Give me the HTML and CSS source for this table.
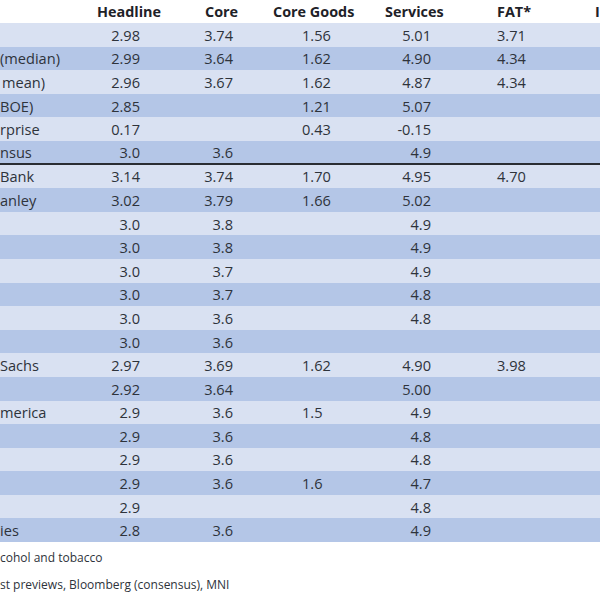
FILE: index.html
```html
<!DOCTYPE html>
<html lang="en">
<head>
<meta charset="utf-8">
<title>CPI previews</title>
<link rel="stylesheet" href="styles.css">
</head>
<body>
<div class="sheet">
  <div class="head">
    <div></div>
    <div>Headline</div>
    <div>Core</div>
    <div>Core Goods</div>
    <div>Services</div>
    <div>FAT*</div>
    <div>I</div>
  </div>
  <div class="rows">
    <div class="row light"><div class="lab"></div><div class="hl">2.98</div><div class="co">3.74</div><div class="cg">1.56</div><div class="sv">5.01</div><div class="ft">3.71</div></div>
    <div class="row dark"><div class="lab">(median)</div><div class="hl">2.99</div><div class="co">3.64</div><div class="cg">1.62</div><div class="sv">4.90</div><div class="ft">4.34</div></div>
    <div class="row light"><div class="lab cut">mean)</div><div class="hl">2.96</div><div class="co">3.67</div><div class="cg">1.62</div><div class="sv">4.87</div><div class="ft">4.34</div></div>
    <div class="row dark"><div class="lab">BOE)</div><div class="hl">2.85</div><div class="co"></div><div class="cg">1.21</div><div class="sv">5.07</div><div class="ft"></div></div>
    <div class="row light"><div class="lab">rprise</div><div class="hl">0.17</div><div class="co"></div><div class="cg">0.43</div><div class="sv">-0.15</div><div class="ft"></div></div>
    <div class="row dark rule"><div class="lab">nsus</div><div class="hl">3.0</div><div class="co">3.6</div><div class="cg"></div><div class="sv">4.9</div><div class="ft"></div></div>
    <div class="row light"><div class="lab">Bank</div><div class="hl">3.14</div><div class="co">3.74</div><div class="cg">1.70</div><div class="sv">4.95</div><div class="ft">4.70</div></div>
    <div class="row dark"><div class="lab">anley</div><div class="hl">3.02</div><div class="co">3.79</div><div class="cg">1.66</div><div class="sv">5.02</div><div class="ft"></div></div>
    <div class="row light"><div class="lab"></div><div class="hl">3.0</div><div class="co">3.8</div><div class="cg"></div><div class="sv">4.9</div><div class="ft"></div></div>
    <div class="row dark"><div class="lab"></div><div class="hl">3.0</div><div class="co">3.8</div><div class="cg"></div><div class="sv">4.9</div><div class="ft"></div></div>
    <div class="row light"><div class="lab"></div><div class="hl">3.0</div><div class="co">3.7</div><div class="cg"></div><div class="sv">4.9</div><div class="ft"></div></div>
    <div class="row dark"><div class="lab"></div><div class="hl">3.0</div><div class="co">3.7</div><div class="cg"></div><div class="sv">4.8</div><div class="ft"></div></div>
    <div class="row light"><div class="lab"></div><div class="hl">3.0</div><div class="co">3.6</div><div class="cg"></div><div class="sv">4.8</div><div class="ft"></div></div>
    <div class="row dark"><div class="lab"></div><div class="hl">3.0</div><div class="co">3.6</div><div class="cg"></div><div class="sv"></div><div class="ft"></div></div>
    <div class="row light"><div class="lab">Sachs</div><div class="hl">2.97</div><div class="co">3.69</div><div class="cg">1.62</div><div class="sv">4.90</div><div class="ft">3.98</div></div>
    <div class="row dark"><div class="lab"></div><div class="hl">2.92</div><div class="co">3.64</div><div class="cg"></div><div class="sv">5.00</div><div class="ft"></div></div>
    <div class="row light"><div class="lab">merica</div><div class="hl">2.9</div><div class="co">3.6</div><div class="cg">1.5</div><div class="sv">4.9</div><div class="ft"></div></div>
    <div class="row dark"><div class="lab"></div><div class="hl">2.9</div><div class="co">3.6</div><div class="cg"></div><div class="sv">4.8</div><div class="ft"></div></div>
    <div class="row light"><div class="lab"></div><div class="hl">2.9</div><div class="co">3.6</div><div class="cg"></div><div class="sv">4.8</div><div class="ft"></div></div>
    <div class="row dark"><div class="lab"></div><div class="hl">2.9</div><div class="co">3.6</div><div class="cg">1.6</div><div class="sv">4.7</div><div class="ft"></div></div>
    <div class="row light"><div class="lab"></div><div class="hl">2.9</div><div class="co"></div><div class="cg"></div><div class="sv">4.8</div><div class="ft"></div></div>
    <div class="row dark"><div class="lab">ies</div><div class="hl">2.8</div><div class="co">3.6</div><div class="cg"></div><div class="sv">4.9</div><div class="ft"></div></div>
  </div>
  <div class="notes">
    <p>cohol and tobacco</p>
    <p>st previews, Bloomberg (consensus), MNI</p>
  </div>
</div>
</body>
</html>
```
FILE: styles.css
```css
html, body {
  margin: 0;
  padding: 0;
  background: #ffffff;
  overflow: hidden;
}
body {
  width: 600px;
  height: 600px;
  font-family: "Open Sans", Lato, sans-serif;
  color: #2e333b;
}
.sheet {
  display: flex;
  flex-direction: column;
}
.head {
  display: grid;
  grid-template-columns: 97px 108px 68px 112px 112px 98px 1fr;
  height: 23px;
  align-items: center;
  font-weight: 700;
  font-size: 14.4px;
  color: #1e2228;
  white-space: nowrap;
}
.rows {
  display: flex;
  flex-direction: column;
}
.row {
  display: grid;
  grid-template-columns: 100px 40px 93px 147px 51px 1fr;
  height: 23.6px;
  box-sizing: border-box;
  align-items: center;
  font-size: 14.6px;
  white-space: nowrap;
}
.light { background: #d9e1f2; }
.dark { background: #b4c6e7; }
.rule { border-bottom: 2px solid #2a2d33; }
.lab { text-align: left; }
.cut { padding-left: 2px; }
.hl, .co, .sv { text-align: right; }
.cg { padding-left: 69px; }
.ft { padding-left: 66px; }
.notes {
  display: flex;
  flex-direction: column;
  gap: 9px;
  padding-top: 7px;
  font-size: 12px;
  color: #2e333b;
}
.notes p {
  margin: 0;
  line-height: 18px;
}
```
